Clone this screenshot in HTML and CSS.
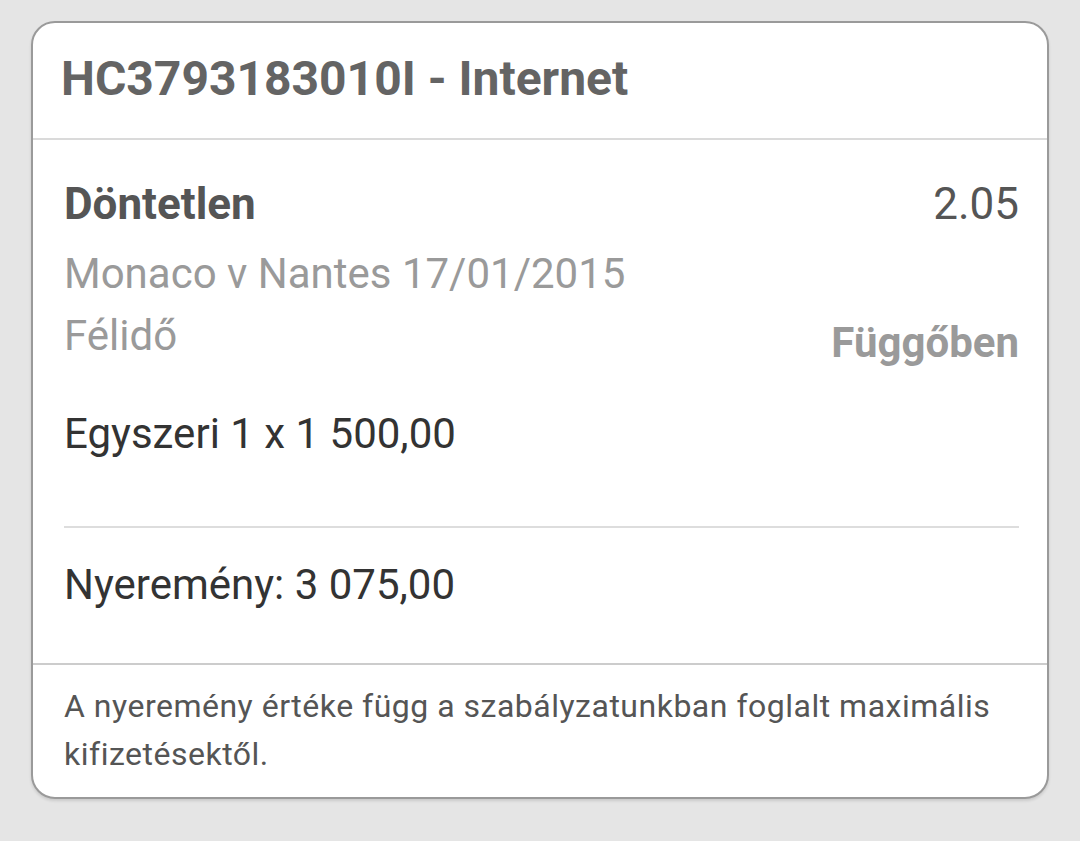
FILE: index.html
```html
<!DOCTYPE html>
<html lang="hu">
<head>
<meta charset="utf-8">
<title>Fogadás</title>
<link rel="stylesheet" href="styles.css">
</head>
<body>
<div class="page">
  <div class="card">
    <div class="card-header">
      <h1 class="title">HC3793183010I - Internet</h1>
    </div>
    <div class="card-body">
      <div class="row">
        <div class="selection">Döntetlen</div>
        <div class="odds">2.05</div>
      </div>
      <div class="event">Monaco v Nantes 17/01/2015</div>
      <div class="row row-market">
        <div class="market">Félidő</div>
        <div class="status">Függőben</div>
      </div>
      <div class="stake">Egyszeri 1 x 1 500,00</div>
      <div class="divider"></div>
      <div class="winnings">Nyeremény: 3 075,00</div>
    </div>
    <div class="card-footer">
      A nyeremény értéke függ a szabályzatunkban foglalt maximális kifizetésektől.
    </div>
  </div>
</div>
</body>
</html>
```

FILE: styles.css
```css
html, body {
  margin: 0;
  padding: 0;
  background: #e5e5e5;
  font-family: Roboto, "Noto Sans", "Liberation Sans", sans-serif;
}

.page {
  padding: 21px 31px 42px 31px;
}

.card {
  background: #ffffff;
  border: 2px solid #9a9a9a;
  border-radius: 24px;
  box-shadow: 0 2px 3px rgba(0, 0, 0, 0.12);
  overflow: hidden;
}

.card-header {
  padding: 28px 30px 31px 28px;
  border-bottom: 2px solid #dadada;
}

.title {
  margin: 0;
  font-size: 48px;
  line-height: 56px;
  font-weight: 700;
  color: #646464;
}

.card-body {
  padding: 38px 28px 53px 31px;
}

.row {
  display: flex;
  justify-content: space-between;
  align-items: flex-start;
}

.selection {
  font-size: 44px;
  line-height: 52px;
  font-weight: 700;
  color: #555555;
}

.odds {
  font-size: 44px;
  line-height: 52px;
  color: #555555;
}

.event {
  margin-top: 19px;
  font-size: 42px;
  line-height: 50px;
  color: #9a9a9a;
}

.row-market {
  margin-top: 12px;
}

.market {
  font-size: 42px;
  line-height: 50px;
  color: #9a9a9a;
}

.status {
  margin-top: 7px;
  font-size: 42px;
  line-height: 50px;
  font-weight: 700;
  color: #9a9a9a;
}

.stake {
  margin-top: 41px;
  font-size: 42px;
  line-height: 50px;
  color: #333333;
}

.divider {
  margin-top: 67px;
  height: 2px;
  background: #dddddd;
}

.winnings {
  margin-top: 32px;
  font-size: 42px;
  line-height: 50px;
  color: #333333;
}

.card-footer {
  border-top: 2px solid #cccccc;
  padding: 17px 28px 19px 31px;
  font-size: 32px;
  line-height: 48px;
  letter-spacing: 0.5px;
  color: #555555;
}
```
